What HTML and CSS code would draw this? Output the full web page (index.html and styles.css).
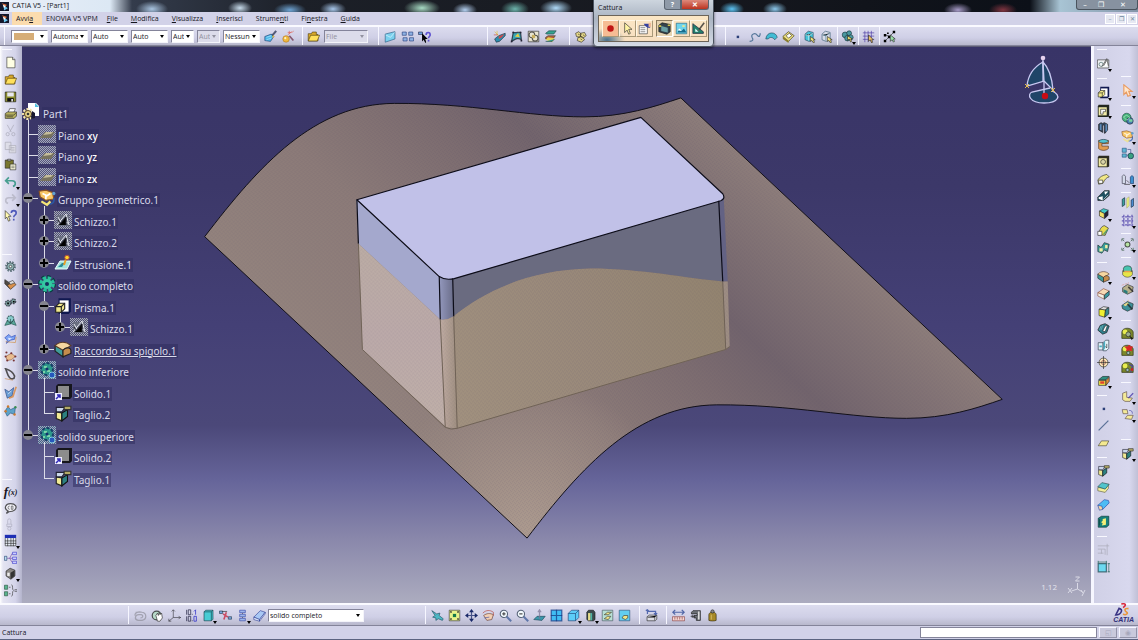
FILE: index.html
```html
<!DOCTYPE html>
<html lang="it">
<head>
  <meta charset="UTF-8">
  <meta name="viewport" content="width=device-width, initial-scale=1.0">
  <title>CATIA V5 - [Part1]</title>
  <link rel="stylesheet" href="styles.css">
</head>
<body>
  <!-- icon sprite -->
  <svg class="sprite" aria-hidden="true">
    <symbol id="app" viewBox="0 0 16 16"><path fill="#14182c" d="M0 0h16v16H0z"/><path fill="#e8743c" d="M3 2l9 3-2 4z"/><path fill="#6cc8f0" d="M7 6l7 5-7 4z"/><path fill="#fff" d="M5 5l5 2-3 4z"/></symbol>
    <symbol id="new" viewBox="0 0 16 16"><path fill="#ffffe4" stroke="#333" d="M3.500 1.500h7l3 3v10h-10z"/><path fill="#ccc" stroke="#333" d="M10.500 1.500v3h3"/></symbol>
    <symbol id="open" viewBox="0 0 16 16"><path fill="#d9a92c" stroke="#4d3c08" d="M1.500 13.500v-9h4l1-2h5v3h2v8z"/><path fill="#ffe05c" stroke="#4d3c08" d="M1.500 13.500l3-7h11l-3 7z"/></symbol>
    <symbol id="save" viewBox="0 0 16 16"><path fill="#8a8c2c" stroke="#111" d="M1.500 2.500h13v12h-13z"/><path fill="#e8e8f0" d="M4 3h8v5H4z"/><path fill="#111" d="M4 10h8v4H4z"/><path fill="#eee" d="M9 11h2v3H9z"/></symbol>
    <symbol id="print" viewBox="0 0 16 16"><path fill="#fff" stroke="#333" d="M5 7l2-5h7l-2 5z"/><path fill="#b7b15e" stroke="#222" d="M1.500 8l3-2h11v5l-3 3h-11z"/><path stroke="#222" fill="none" d="M2 10h10l3-3M3 12h8"/></symbol>
    <symbol id="cut" viewBox="0 0 16 16"><g fill="none" stroke="#a4a4b4"><path d="M4 1l5 9M12 1l-5 9"/><circle cx="4.500" cy="12.500" r="2"/><circle cx="11.500" cy="12.500" r="2"/></g></symbol>
    <symbol id="copy" viewBox="0 0 16 16"><g fill="#dedee8" stroke="#a8a8b4"><path d="M1.500 1.500h7v9h-7zM6.500 5.500h8v9h-8z"/><path d="M8 8h5M8 10h5M8 12h5"/></g></symbol>
    <symbol id="paste" viewBox="0 0 16 16"><path fill="#79772f" stroke="#222" d="M1.500 2.500h10v10h-10z"/><path fill="#ddd" stroke="#222" d="M4.500 1.500h4v2h-4z"/><path fill="#ffffe0" stroke="#222" d="M7.500 7.500h7v7h-7z"/><path stroke="#333" d="M9 10h4M9 12h4"/></symbol>
    <symbol id="undo" viewBox="0 0 16 16"><path fill="none" stroke="#168a70" stroke-width="2" d="M2 7h8c5 0 5 6 1 7M6 3L2 7l4 4"/></symbol>
    <symbol id="redo" viewBox="0 0 16 16"><path fill="none" stroke="#b2b2c0" stroke-width="2" d="M14 7H6c-5 0-5 6-1 7M10 3l4 4-4 4"/></symbol>
    <symbol id="help" viewBox="0 0 16 16"><path fill="#fff8b0" stroke="#222" d="M1.500 2v10l2-2 2 5 2-1-2-5h3z"/><path fill="none" stroke="#1f2eaa" stroke-width="2" d="M9 5c0-4 6-4 6 0 0 3-3 2-3 5M12 12v2"/></symbol>
    <symbol id="gear" viewBox="0 0 16 16"><circle cx="8" cy="8" r="5.500" fill="none" stroke="#3e5a60" stroke-width="2.500" stroke-dasharray="2 1.400"/><circle cx="8" cy="8" r="4.500" fill="#8fb3b4" stroke="#28353c"/><circle cx="8" cy="8" r="1.500" fill="#fff" stroke="#222"/></symbol>
    <symbol id="gear-green" viewBox="0 0 16 16"><circle cx="8" cy="8" r="6" fill="none" stroke="#083e40" stroke-width="4" stroke-dasharray="2.600 2.100"/><circle cx="8" cy="8" r="5.500" fill="none" stroke="#28c09a" stroke-width="3" stroke-dasharray="3 1.300"/><circle cx="8" cy="8" r="4.500" fill="#35c9a2"/><circle cx="8" cy="8" r="1.800" fill="#14305c"/></symbol>
    <symbol id="part-box" viewBox="0 0 16 16"><path fill="#504a44" stroke="#222" d="M1 2l6 4v7l-6-6z"/><path fill="#d88f4a" stroke="#333" d="M4 9l7-4 4 3-7 6z"/><path fill="#ddd" stroke="#333" d="M6 5l5-2 2 3-5 2z"/></symbol>
    <symbol id="gears" viewBox="0 0 16 16"><g fill="#799" stroke="#223" stroke-width="1.500"><circle cx="5" cy="9" r="3.500" stroke-dasharray="2 1"/><circle cx="11.500" cy="6.500" r="3" stroke-dasharray="2 1"/></g><path d="M4 8h2v2H4zM11 6h2v2h-2z"/></symbol>
    <symbol id="gear-net" viewBox="0 0 16 16"><path fill="#5aa79a" stroke="#1c5048" d="M1 14l3-6 8-1 3 7-6-2z"/><circle cx="8" cy="6" r="4" fill="#8cc" stroke="#244" stroke-width="1.500" stroke-dasharray="2 1"/><path stroke="#244" fill="none" d="M4 8l4 4 4-5M8 6v6"/></symbol>
    <symbol id="surf-blue" viewBox="0 0 16 16"><path fill="#7ea4f4" stroke="#2340b4" d="M1 7l5-4 3 3 5-2-1 5-5 1-5 4 1-4z"/><path fill="#dce6ff" d="M5 7l5 1-4 2z"/><path stroke="#d08a3c" fill="none" d="M2 12l12 1 1-7"/></symbol>
    <symbol id="net-orange" viewBox="0 0 16 16"><path fill="#e9bd90" stroke="#8c5c40" d="M2 8l7-4 5 4-5 4-5 1z"/><g fill="#733"><circle cx="2" cy="8" r="1.300"/><circle cx="9" cy="4" r="1.300"/><circle cx="14" cy="8" r="1.300"/><circle cx="4" cy="13" r="1.300"/><circle cx="12" cy="13" r="1.300"/><circle cx="3" cy="3" r="1.300"/></g></symbol>
    <symbol id="loop" viewBox="0 0 16 16"><path fill="none" stroke="#23211f" stroke-width="2" d="M2 1c6 2 10 6 11 9 0 4-4 4-6 2C4 9 4 5 2 1z"/><path stroke="#c8894a" fill="none" d="M1 13l10 2"/></symbol>
    <symbol id="sheet" viewBox="0 0 16 16"><path fill="#6b9fd6" stroke="#27427e" d="M1 4l5 3 6-5-2 10-6 3z"/><path stroke="#d98130" stroke-width="2" fill="none" d="M15 1l-4 12-5 2"/><path stroke="#fff" d="M5 10l4-4"/></symbol>
    <symbol id="poly-blue" viewBox="0 0 16 16"><path fill="#5da2c8" stroke="#27547c" d="M1 9l4-6 3 4 6-3-1 9-5-2-4 4z"/><g fill="#ce7a2d"><circle cx="2" cy="9" r="1.500"/><circle cx="5" cy="3" r="1.500"/><circle cx="13" cy="13" r="1.500"/></g><circle cx="14" cy="4" r="1.500" fill="#3a8c50"/></symbol>
    <symbol id="bubble" viewBox="0 0 16 16"><path fill="#f2f2f8" stroke="#222" stroke-width="1.500" d="M3 14l2-3C-1 8 2 2 8 2s9 4 5 8c-2 2-5 2-7 2z"/><path fill="none" stroke="#444" d="M7 5a2 2 0 100 4M9 5h2v4H9z"/></symbol>
    <symbol id="lock" viewBox="0 0 16 16"><g fill="none" stroke="#a9a9bb"><path d="M4.500 7V3a2 2 0 014 0v4"/><path d="M3.500 7.500h6v3h-6z"/><circle cx="6.500" cy="13" r="2"/></g></symbol>
    <symbol id="table" viewBox="0 0 16 16"><path fill="#e8eef8" d="M1 2h14v13H1z"/><path fill="#1d2fb4" d="M1 1h14v4H1z"/><path fill="none" stroke="#222" d="M1.500 5v9.500h13V5M1 8.500h14M1 11.500h14M4.500 5v10M8.500 5v10M11.500 5v10"/></symbol>
    <symbol id="relations" viewBox="0 0 16 16"><path fill="none" stroke="#7040a0" d="M4 9h3l3-6M7 9h3M7 9l3 5"/><path fill="#bde" stroke="#1f3f70" d="M.5 6.500h3v5h-3z"/><path fill="#ccf" stroke="#3a3ac8" d="M10.500 1.500h5v3h-5zM10.500 7.500h5v3h-5zM10.500 12.500h5v3h-5z"/></symbol>
    <symbol id="cube-dark" viewBox="0 0 16 16"><path fill="#8a8784" stroke="#1d1d1d" d="M2.500 5l5-3.500 6 2.500v7l-5 4-6-4z"/><path fill="#333" d="M8 7l5-3v7l-5 4z"/><path fill="#eee" d="M4 7h3v4H4z"/></symbol>
    <symbol id="formula" viewBox="0 0 16 16"><path fill="#58b48e" stroke="#28503c" d="M.5 1.500h4v5h-4zM.5 9.500h4v5h-4z"/><path stroke="#333" fill="none" d="M6 4h2M6 12h2M9 1c3 0 0 6 3 7-3 1 0 7-3 7M13 7h3M13 9h3"/></symbol>
    <symbol id="brush" viewBox="0 0 16 16"><path fill="#4db8e8" stroke="#1e3c70" d="M1 8l8-3 3 3-4 6-7-1z"/><path stroke="#263050" stroke-width="2.500" d="M15 1l-5 6"/><path stroke="#c9ecff" fill="none" d="M3 9l6-2M3 12l6-2"/><path fill="#e8b838" d="M11 6l2 2-3 2z"/></symbol>
    <symbol id="wand" viewBox="0 0 16 16"><circle cx="5" cy="11" r="4" fill="#f0b93e" stroke="#b07720"/><circle cx="4" cy="10" r="1.300" fill="#fff3c0"/><path stroke="#6c3048" stroke-width="2" d="M9 7l5 6"/><path stroke="#e06050" d="M9 1v4M7 3h5M13 3l1-2M7 6l5-4"/></symbol>
    <symbol id="envelope" viewBox="0 0 16 16"><path fill="#7bd0ee" stroke="#27587e" d="M1.500 5l12-3v9l-12 4z"/><path fill="none" stroke="#e8faff" d="M2 6l6 3 5-6"/></symbol>
    <symbol id="links" viewBox="0 0 16 16"><g fill="#8fb2e4" stroke="#243c78"><path d="M1.500 2.500h5v4h-5zM9.500 2.500h5v4h-5zM2.500 9.500h5v4h-5zM10.500 9.500h5v4h-5z"/></g></symbol>
    <symbol id="whats" viewBox="0 0 16 16"><path fill="#6da3de" stroke="#224" d="M.5 2.500h5v3h-5z"/><path fill="#000" d="M5 4v10l2-2 2 4 1-1-1-4h3z"/><path fill="none" stroke="#3a28c8" stroke-width="2" d="M10 6c0-4 5-4 5 0 0 2-2 2-2 4M13 12v2"/></symbol>
    <symbol id="paint-cube" viewBox="0 0 16 16"><path fill="#2b8cac" stroke="#1c2c3c" d="M2 11l5-4 8-3v3l-7 7-4 1z"/><path fill="#d04848" d="M7 8l7-3-3 4-4 2z"/><path stroke="#e0c030" d="M2 2l5 5M5 1v5"/><path stroke="#c43" d="M1 6h5"/></symbol>
    <symbol id="patch" viewBox="0 0 16 16"><path fill="#3aa6b4" stroke="#151c2a" stroke-width="1.500" d="M4 3c4 1 6-1 9 0l1 9c-4-3-7-1-12 2z"/><path fill="#e8cf44" d="M6 8l4-4 2 5z"/><path fill="#223" d="M3 2h2v2H3zM12 2h2v2h-2zM1 13h2v2H1zM13 12h2v2h-2z"/></symbol>
    <symbol id="target-box" viewBox="0 0 16 16"><path fill="#e8e4d0" stroke="#222" d="M1.500 1.500h13v13h-13z"/><g fill="none" stroke="#222" stroke-width="1.300"><circle cx="6" cy="6" r="3.500"/><circle cx="10" cy="10" r="3.500"/></g><path fill="#c8b060" d="M6 6h4v4H6z"/></symbol>
    <symbol id="layers" viewBox="0 0 16 16"><path fill="#b45b3a" stroke="#343" d="M2 9l3-2h9l-3 4H2z"/><path fill="#e5cf54" d="M2 12l3-3 8 1-3 5z"/><path fill="#34a390" stroke="#244" d="M2 4l4-3h9l-3 4H3zM2 14h8l3-3"/></symbol>
    <symbol id="nuts" viewBox="0 0 16 16"><g fill="#e6d98a" stroke="#2c2820"><path d="M2 4l4-2 3 3-2 4-4-1zM8 4l5-1 2 4-4 3-3-2zM5 9l5-1 3 4-4 3-5-2z"/><path d="M5 5l2 1M11 6l2 1M8 11l2 1"/></g></symbol>
    <symbol id="point" viewBox="0 0 16 16"><path fill="#2b3f78" d="M7 7h3v3H7z"/></symbol>
    <symbol id="curve" viewBox="0 0 16 16"><path fill="none" stroke="#2d5a82" stroke-width="1.500" d="M2 14c4 0 5-2 3-5-2-4 4-6 6-3 3 4 4 1 4-2"/></symbol>
    <symbol id="cap" viewBox="0 0 16 16"><path fill="#42bcd4" stroke="#1d4258" d="M1 11c1-10 13-9 14-2l-3 3c-2-3-6-4-8-1z"/></symbol>
    <symbol id="eraser-y" viewBox="0 0 16 16"><path fill="#ecdf7c" stroke="#333018" d="M1 8l7-6 7 5-7 7z"/><path fill="#fff" stroke="#333018" d="M5 7l4-3 3 3-4 3z"/><path fill="#8b7e2d" d="M1 8v3l7 5v-3z"/></symbol>
    <symbol id="sel-a" viewBox="0 0 16 16"><path fill="#48c4d8" stroke="#254258" d="M2.500 5l4-3.500 6 1.500v9l-5 2-5-2z"/><path stroke="#e8fcff" d="M7 5v8M3 6l4 1 5-3"/><path fill="#f0e07c" stroke="#222" d="M9 8v6l2-1 2 3 1-1-1-3h2z"/></symbol>
    <symbol id="sel-b" viewBox="0 0 16 16"><path fill="#d8dce8" stroke="#32556c" d="M2.500 5l4-3.500 6 1.500v9l-5 2-5-2z"/><path stroke="#5c8ca4" d="M7 5v8M3 6l4 1 5-3"/><path fill="#f0e07c" stroke="#222" d="M9 8v6l2-1 2 3 1-1-1-3h2z"/></symbol>
    <symbol id="sel-gear" viewBox="0 0 16 16"><g fill="#4a98a0" stroke="#1a3238"><circle cx="5" cy="6" r="3.500"/><circle cx="10" cy="4" r="3"/><circle cx="8" cy="10" r="3.500"/><circle cx="12" cy="9" r="3"/></g><path fill="#e9dc6c" stroke="#222" d="M8 7v6l2-2 2 4 1-1-1-3h2z"/></symbol>
    <symbol id="grid-cur" viewBox="0 0 16 16"><path stroke="#4430a0" fill="none" d="M1 3.500h14M1 7.500h14M1 11.500h14M3.500 1v14M7.500 1v14M11.500 1v14"/><path fill="#eec064" stroke="#222" d="M8 6v8l2-2 2 4 1-1-1-3h2z"/></symbol>
    <symbol id="net-black" viewBox="0 0 16 16"><path stroke="#222" fill="none" d="M2 14L14 2M2 6l8 2"/><path d="M1 5h3v3H1zM5 3h2v2H5zM12 1h3v3h-3zM6 7h3v3H6zM1 12h3v3H1z"/><path fill="#9be0a8" stroke="#222" d="M9 6v8l2-2 2 3 1-1-1-3h2z"/></symbol>
    <symbol id="rec" viewBox="0 0 16 16"><circle cx="8" cy="8" r="4" fill="#c01414"/></symbol>
    <symbol id="arrow" viewBox="0 0 16 16"><path fill="#fff4a4" stroke="#222" d="M4.500 1v12l3-3 2 5 2-1-2-5h4z"/></symbol>
    <symbol id="arrow-o" viewBox="0 0 16 16"><path fill="#ffe6cc" stroke="#e8853a" stroke-width="1.400" d="M3.500 1v12l3-3 2 5 3-1-2-5h4z"/></symbol>
    <symbol id="props" viewBox="0 0 16 16"><path fill="#fff" stroke="#333" d="M1.500 4.500h10v10h-10z"/><path stroke="#444" d="M3 7h6M3 9.500h6M3 12h6"/><path fill="#3440a0" d="M7 2h8v5h-3l-3-2z"/><path fill="#edb898" d="M13 1h3v5h-3z"/></symbol>
    <symbol id="camera" viewBox="0 0 16 16"><path fill="#33424c" stroke="#111" d="M1 4l4-3 10 2v9l-4 3-10-3z"/><path fill="#6aa0a4" d="M4 5l8 2v6l-8-2z"/><path fill="#cfc24a" d="M1 4h3v2H1zM12 3h3v2h-3z"/></symbol>
    <symbol id="pic" viewBox="0 0 16 16"><path fill="#6fd4ec" stroke="#20607c" d="M1.500 1.500h13v13h-13z"/><path fill="#f2e98c" d="M9 4h3v2H9z"/><path fill="#176b8c" d="M3 13l2-4 3 2 3-3 3 5z"/><path fill="#fff" d="M3 10l3-2 2 3z"/></symbol>
    <symbol id="square" viewBox="0 0 16 16"><path fill="#23806c" stroke="#113" d="M1 2v12h13v-2z"/><path fill="#dff" d="M4 8v4h4z"/><path stroke="#222" stroke-width="2" d="M15 1L9 9"/><path stroke="#b33" d="M9 9l-2 2"/></symbol>
    <symbol id="spiral" viewBox="0 0 16 16"><path fill="none" stroke="#93939f" stroke-width="1.500" d="M2 4h8c6 1 6 9 0 10H5c-5-1-4-7 1-7h3c3 1 2 4-1 4M1 8c0-4 4-5 9-4"/></symbol>
    <symbol id="hand-r" viewBox="0 0 16 16"><circle cx="7" cy="8" r="5.500" fill="#b7d8c8" stroke="#222" stroke-width="1.500"/><path fill="#fff" stroke="#222" d="M6 8l2-3 1 3 1-4 1 3 2-2 1 6-3 4H8z"/></symbol>
    <symbol id="axis" viewBox="0 0 16 16"><path fill="none" stroke="#34343c" d="M6.500 1v9.500H16M6.500 10.500L1 15M4.500 3l2-2 2 2M13 8.500l2 2-2 2M1 12v3h3"/></symbol>
    <symbol id="dims" viewBox="0 0 16 16"><g fill="none" stroke="#252545" stroke-width="1.200"><path d="M2 1v6M4 1h3v6H4zM9 6v1M2 9v6M4 9h3v6H4zM9 14v1"/><path stroke="#2a2ac8" d="M13 1v6M11 9h3v6h-3zM13 1l-2 2"/></g></symbol>
    <symbol id="cube-teal" viewBox="0 0 16 16"><path fill="#48ccd4" stroke="#113a44" d="M2.500 3.500l2-2h9v11l-2 2h-9z"/><path fill="none" stroke="#113a44" d="M2.500 3.500h9v11M11.500 3.500l2-2"/></symbol>
    <symbol id="pinch" viewBox="0 0 16 16"><path fill="#76a9e4" stroke="#234" d="M.5 2.500h4v3h-4zM11.500 9.500h4v3h-4z"/><path stroke="#c82038" stroke-width="2" fill="none" d="M5 6l6 4M9 4L6 13"/><path stroke="#222" d="M4 3h6"/></symbol>
    <symbol id="stack" viewBox="0 0 16 16"><path fill="#9db7ec" stroke="#3244a4" d="M4.500 1.500h7v3h-7zM4.500 6.500h7v3h-7zM4.500 11.500h7v3h-7z"/><path stroke="#222" d="M8 5v1M8 10v1"/></symbol>
    <symbol id="erase" viewBox="0 0 16 16"><path fill="#a9c8f4" stroke="#2a3c94" d="M1 10l8-8 6 2-7 9z"/><path fill="#e6effd" stroke="#2a3c94" d="M1 10l7 3v2l-7-2zM8 13l7-9v2l-7 9z"/></symbol>
    <symbol id="fly" viewBox="0 0 16 16"><path fill="#4cb8c4" stroke="#1d4c60" d="M1 2l6 4 4-1-1 3 5 4-1 2-5-2-3 2v-3l-4-1 3-2z"/></symbol>
    <symbol id="fit" viewBox="0 0 16 16"><path fill="#e8f48a" stroke="#333" d="M1.500 1.500h13v13h-13z"/><path fill="#147a4a" d="M6 6h4v4H6z"/><path stroke="#333" fill="none" d="M3 3l2 2M13 3l-2 2M3 13l2-2M13 13l-2-2M3 5V3h2M11 3h2v2M3 11v2h2M11 13h2v-2"/></symbol>
    <symbol id="pan" viewBox="0 0 16 16"><path fill="none" stroke="#182868" stroke-width="1.500" d="M8 2v12M2 8h12"/><path fill="#182868" d="M8 0l3 4H5zM8 16l3-4H5zM0 8l4-3v6zM16 8l-4-3v6z"/></symbol>
    <symbol id="rotate" viewBox="0 0 16 16"><path fill="#f2cfb4" stroke="#5c342c" d="M2 8c4-3 8-3 12-1l-2 6-6 1z"/><path fill="none" stroke="#b43c30" d="M1 5c4-4 9-4 13-1v4"/><path stroke="#3a46a0" d="M3 11l6-1"/></symbol>
    <symbol id="zoom-in" viewBox="0 0 16 16"><path stroke="#3c5c98" stroke-width="2.500" d="M9 9l6 6"/><circle cx="6" cy="6" r="4.500" fill="#f4fbff" stroke="#24344c" stroke-width="1.300"/><path stroke="#111" stroke-width="1.500" d="M4 6h4M6 4v4"/></symbol>
    <symbol id="zoom-out" viewBox="0 0 16 16"><path stroke="#3c5c98" stroke-width="2.500" d="M9 9l6 6"/><circle cx="6" cy="6" r="4.500" fill="#f4fbff" stroke="#24344c" stroke-width="1.300"/><path stroke="#111" stroke-width="1.500" d="M4 6h4"/></symbol>
    <symbol id="normal" viewBox="0 0 16 16"><path fill="#3b98ac" stroke="#1a4254" d="M1 13l4-4h10l-4 5z"/><path stroke="#7d7898" fill="none" stroke-width="1.500" d="M8 12V2M6 4l2-3 2 3"/></symbol>
    <symbol id="views" viewBox="0 0 16 16"><path fill="#40bdf4" stroke="#143b84" stroke-width="1.500" d="M1.500 1.500h13v13h-13z"/><path stroke="#143b84" stroke-width="1.500" d="M8 1v14M1 8h14"/></symbol>
    <symbol id="iso" viewBox="0 0 16 16"><path fill="#5ccdf8" stroke="#1c3a6c" d="M1.500 5.500l4-4h9v9l-4 4h-9z"/><path fill="none" stroke="#1c3a6c" d="M1.500 5.500h9v9M10.500 5.500l4-4"/></symbol>
    <symbol id="shade" viewBox="0 0 16 16"><path fill="#3c4a4c" stroke="#111" d="M3.500 4l2-2.500h6l2 2.500v9l-2 1.500h-6l-2-1.500z"/><path fill="#e6dc8a" d="M5 5h3v9H5z"/><path fill="#4cb2a4" d="M8 5h2v9H8z"/></symbol>
    <symbol id="hide" viewBox="0 0 16 16"><path fill="#b8e0d4" stroke="#44525c" d="M1.500 1.500h13v13h-13z"/><path fill="#f0e486" stroke="#333" d="M4 7l4-3h5l-4 3zM4 12l4-3h4l-3 4z"/></symbol>
    <symbol id="swap" viewBox="0 0 16 16"><path fill="#62cdf0" stroke="#2f4f74" d="M1.500 1.500h13v13h-13z"/><path fill="#f0e486" stroke="#333" d="M5 11l2-3h5v3l-3 2z"/></symbol>
    <symbol id="printer2" viewBox="0 0 16 16"><path fill="#dcdce4" stroke="#222" d="M2.500 9.500l3-2h9v5l-2 2h-10z"/><path stroke="#222" d="M3 10h9l2-2M12 10v4"/><path fill="none" stroke="#28449c" stroke-width="1.500" d="M3 6V3h10v3M1 2l2-1 2 2M11 5l2 2 2-2"/></symbol>
    <symbol id="ruler" viewBox="0 0 16 16"><path stroke="#234090" stroke-width="1.500" fill="none" d="M1 4h14M4 1L1 4l3 3M12 1l3 3-3 3"/><path fill="#f6d8d4" stroke="#823434" d="M.5 9.500h15v5H.5z"/><path stroke="#823434" d="M3.500 10v3M6.500 10v3M9.500 10v3M12.500 10v3"/></symbol>
    <symbol id="clamp" viewBox="0 0 16 16"><path fill="#6c7076" stroke="#111" d="M5 2h9v12H9v-3H6V8h4V6H3V4z"/><path fill="#ddd" d="M11 3h2v10h-2z"/><path stroke="#111" d="M2 9h5M4 7v4"/></symbol>
    <symbol id="weight" viewBox="0 0 16 16"><path fill="#a88a28" stroke="#2c2408" d="M3.500 7c0-2 2-2 2-3h5c0 1 2 1 2 3v7c-2 1-7 1-9 0z"/><circle cx="8" cy="3" r="2" fill="#888" stroke="#222"/><path stroke="#f0d888" d="M6.500 7v6"/></symbol>
    <symbol id="sketch" viewBox="0 0 16 16"><path fill="#f0f2f4" stroke="#333" d="M.5 3.500h14v10H.5z"/><circle cx="5" cy="9" r="2.500" fill="none" stroke="#39605c"/><path fill="#fff" stroke="#222" d="M6 12l6-10 2 9M8 11l4-7"/></symbol>
    <symbol id="pad" viewBox="0 0 16 16"><path fill="#101850" d="M4 1h11v12l-2 2H4z"/><path fill="#fff" d="M5 3h8v10H5z"/><path fill="#f0e88c" stroke="#222" d="M1.500 8.500l3-3h5v5l-3 3h-5z"/><path fill="none" stroke="#222" d="M1.500 8.500h5v5M6.500 8.500l3-3"/></symbol>
    <symbol id="pocket" viewBox="0 0 16 16"><path fill="#222720" d="M2 1h13v13l-2 2H1V3z"/><path fill="#f2eca8" d="M2 4h10v10H2z"/><path fill="#fff" stroke="#222" d="M4.500 6.500h6v3h-3v3h-3z"/></symbol>
    <symbol id="shaft" viewBox="0 0 16 16"><path fill="#344860" stroke="#111" d="M2 4l3-2 2 1 2-1 4 2v7l-3 4H9V5H7v9l-5-3z"/><path stroke="#6b9fd4" stroke-width="2" d="M4.500 4v7M11.500 4v9"/></symbol>
    <symbol id="groove" viewBox="0 0 16 16"><path fill="#e39c50" stroke="#4c2c10" d="M2 3v10c3 3 9 3 12 0v-3H6V7h8V3z"/><path fill="#54c3cf" stroke="#234" d="M2 4c2-3 10-3 12 0-2 3-10 3-12 0z"/></symbol>
    <symbol id="hole" viewBox="0 0 16 16"><path fill="#2c2c20" d="M2 1h13v13l-2 1H1V3z"/><path fill="#f0eaa4" d="M2 4h10v10H2z"/><circle cx="7.500" cy="8.500" r="3" fill="#d8d4a8" stroke="#222"/></symbol>
    <symbol id="rib" viewBox="0 0 16 16"><path fill="#f2e888" stroke="#2c2c18" d="M1 10c2-4 6-6 11-7l3 3c-4 1-5 3-8 8l-5 1z"/><path fill="#fff" stroke="#222" d="M2 10h5v4H2z"/></symbol>
    <symbol id="slot" viewBox="0 0 16 16"><path fill="#1f5060" stroke="#111" d="M1 10l8-8h6v6l-7 6H1z"/><path fill="#fff" d="M2 12v-2l5-1v5zM9 3h5l-4 4z"/><path stroke="#fff" d="M8 13l6-6"/></symbol>
    <symbol id="stiff" viewBox="0 0 16 16"><path fill="#40c8c8" stroke="#133" d="M3 5l5-3 6 2-5 4z"/><path fill="#f0e068" stroke="#222" d="M3 5l6 3v6l-6-3z"/><path fill="#223" d="M9 8l5-4v6l-5 5z"/></symbol>
    <symbol id="loft" viewBox="0 0 16 16"><path fill="#e8dc50" stroke="#222" d="M2 13c1-6 3-10 7-11l5 3-4 9z"/><path fill="#fff" stroke="#222" d="M1 9h5v5H1z"/><path stroke="#348c70" stroke-width="2" fill="none" d="M8 13l5-6"/></symbol>
    <symbol id="loft2" viewBox="0 0 16 16"><path fill="#3b9c98" stroke="#122" d="M1 5l4 3 4-6 6 2-2 9-4-2-3 4-5-2z"/><path fill="#f3eda4" d="M3 9h4v4H3zM10 5h3v4h-3z"/></symbol>
    <symbol id="fillet" viewBox="0 0 16 16"><path fill="#3f9c9a" stroke="#222" d="M1 5l7 4v6l-7-5z"/><path fill="#f6d6a0" stroke="#5c3c28" d="M1 5c4-4 10-4 14 0l-7 4z"/><path fill="#c48c4c" stroke="#222" d="M8 9c4-4 7-1 7 0v3l-7 3z"/></symbol>
    <symbol id="chamfer" viewBox="0 0 16 16"><path fill="#f6d9b4" stroke="#8c4c38" d="M1 7l7-5 7 3-6 5z"/><path fill="#f3efe4" stroke="#8c4c38" d="M1 7l8 3v5l-8-4z"/><path fill="#3b98a0" stroke="#222" d="M9 10l6-5v5l-6 5z"/></symbol>
    <symbol id="draft" viewBox="0 0 16 16"><path fill="#f0f030" stroke="#222" d="M2.500 5l8 1-1 9-7-2z"/><path fill="#ddd" stroke="#222" d="M3 5l5-3 6 1-4 3z"/><path fill="#36888c" stroke="#222" d="M10.500 6l4-3v8l-5 4z"/></symbol>
    <symbol id="shell" viewBox="0 0 16 16"><path fill="#2f7f8c" stroke="#111" d="M1 10l3-6 6-2 5 3-3 8-5 2z"/><path fill="#fff" stroke="#222" d="M7 11l3-6 3-1-3 8z"/><path stroke="#7fc0c4" d="M5 5l-2 5M7 4l-2 6"/></symbol>
    <symbol id="thick" viewBox="0 0 16 16"><path fill="#e4f2f8" stroke="#234" d="M1.500 4.500h6v9h-6zM7.500 4.500l3-3h4v10l-3 3h-4z"/><path fill="#4ab0c4" d="M8 5l2-3v9l-2 3zM3 8h3v2H3z"/><path stroke="#222" d="M12 6v5M10 9l2 2"/></symbol>
    <symbol id="target" viewBox="0 0 16 16"><circle cx="8" cy="8" r="5.500" fill="#f8e4b4" stroke="#222"/><circle cx="8" cy="8" r="2.500" fill="none" stroke="#833"/><path stroke="#222" d="M8 0v16M0 8h16"/></symbol>
    <symbol id="replace" viewBox="0 0 16 16"><path fill="#2f9080" stroke="#122" d="M2 7l5-4h8l-4 4z"/><path fill="#f0e448" stroke="#222" d="M2 8h9v6H2z"/><path fill="#e04030" d="M4 9h5v3H4z"/><path fill="#e0903c" stroke="#222" d="M11 8l4-4v5l-4 5z"/></symbol>
    <symbol id="line" viewBox="0 0 16 16"><path stroke="#33507c" stroke-width="1.500" d="M2 14L14 2"/></symbol>
    <symbol id="plane" viewBox="0 0 16 16"><path fill="#f4e990" stroke="#444028" d="M1.500 12l4-6h9l-3 6z"/></symbol>
    <symbol id="split" viewBox="0 0 16 16"><path fill="#f1ea94" stroke="#222" d="M2 7l5 1v7l-5-2z"/><path fill="#2c8080" stroke="#111" d="M7 8l5-3v6l-5 4z"/><path fill="#ccd8ec" stroke="#223" d="M2 3h8l-3 4H2z"/><path fill="#b3aa66" stroke="#333" d="M9 2h6v3h-6z"/></symbol>
    <symbol id="thicksurf" viewBox="0 0 16 16"><path fill="#f4f09c" stroke="#554" d="M1 8l9 1 4-5v5l-4 5-9-2z"/><path fill="#52c4cc" stroke="#244" d="M1 7l5-5 9 2-5 6z"/></symbol>
    <symbol id="close" viewBox="0 0 16 16"><path fill="#4cbcf4" stroke="#2444a8" d="M1 9l8-7 5 1 1 3-8 8z"/><path fill="#f8d8a4" stroke="#2444a8" d="M1 9l5 1 1 4-4 1z"/></symbol>
    <symbol id="sew" viewBox="0 0 16 16"><path fill="#16807c" stroke="#053030" d="M1.500 4l4-2.500h9v11l-3 2.500h-10z"/><path fill="#f4ee78" d="M7 5l4-1v8l-5 1 1-3-2-1 2-2z"/><path stroke="#053030" d="M3 5v8"/></symbol>
    <symbol id="gray-corner" viewBox="0 0 16 16"><path fill="none" stroke="#a5a5b1" d="M1 3.500h14M1 7.500h9v7M12.500 1v14M1 12.500h7M5.500 8v5"/></symbol>
    <symbol id="frame" viewBox="0 0 16 16"><path fill="#6cd8f0" stroke="#1f4c54" stroke-width="1.500" d="M1.500 4.500h10v10h-10z"/><path stroke="#1c5c50" fill="none" d="M1 2.500h11M14.500 4v11M1.500 1v3M11.500 1v3M13 4.500h3M13 14.500h3"/></symbol>
    <symbol id="catalog" viewBox="0 0 16 16"><circle cx="7" cy="7" r="5.500" fill="#42b078" stroke="#234c48"/><circle cx="11" cy="11" r="4" fill="#4880b0" stroke="#223"/><path stroke="#c3f0d0" fill="none" d="M3 6l4-2 4 3-4 3z"/><path fill="#7cd4a0" d="M10 9h4v3h-4z"/></symbol>
    <symbol id="geoset" viewBox="0 0 16 16"><path fill="#f8c868" stroke="#8c5424" d="M1 2l6-1 6 2 1 6-7 1-5-3z"/><path stroke="#fff" fill="none" stroke-width="1.500" d="M4 4l4 2 3-2M7 6v3"/><path fill="none" stroke="#2b57a4" stroke-width="1.500" d="M9 13c3 1 6-1 5-5"/><path fill="none" stroke="#f4e478" stroke-width="2" d="M3 11l5 3 3-3"/><circle cx="14" cy="4" r="1.500" fill="#60a0d0"/></symbol>
    <symbol id="body-tree" viewBox="0 0 16 16"><path fill="#5fb6d4" stroke="#25507c" d="M1.500 1.500h5v5h-5zM1.500 8.500h5v4h-5z"/><path stroke="#28407c" fill="none" d="M8 3h4v5M7 10h3"/><circle cx="12" cy="11" r="3.500" fill="#39a080" stroke="#124"/></symbol>
    <symbol id="trans" viewBox="0 0 16 16"><path fill="#d6dceb" stroke="#334" d="M1.500 4l2-2 2 2v9h-4z"/><path fill="#3b8fd0" stroke="#12305c" d="M11.500 5l2-2 2 2v8h-4z"/><path stroke="#222" fill="none" d="M4 14h7M7 9l3 3"/></symbol>
    <symbol id="mirror" viewBox="0 0 16 16"><path fill="#3aa09c" stroke="#123" d="M1.500 4l3-2v9l-3 2z"/><path fill="#ecf07a" stroke="#aa8" d="M7 3l3-2v11l-3 3z"/><path fill="#4a8cd4" stroke="#123" d="M12.500 5l3-2v9l-3 2z"/></symbol>
    <symbol id="pattern" viewBox="0 0 16 16"><path stroke="#4334a4" fill="none" stroke-dasharray="3 1" stroke-width="1.500" d="M1 3.500h14M1 8.500h14M1 13.500h14M3.500 1v14M8.500 1v14M13.500 1v14"/></symbol>
    <symbol id="scale" viewBox="0 0 16 16"><circle cx="8" cy="8" r="3" fill="#b8e4a4" stroke="#222" stroke-width="1.300"/><path fill="none" stroke="#23482c" d="M4 4L2 2M12 4l2-2M4 12l-2 2M12 12l2 2M1 4V1h3M12 1h3v3M1 12v3h3M12 15h3v-3"/></symbol>
    <symbol id="material" viewBox="0 0 16 16"><path fill="#e6e648" stroke="#444" d="M2 7h12v5c-3 4-9 4-12 0z"/><path fill="#48c4b0" stroke="#333" d="M3 4c1-4 9-4 10 0v4H3z"/><path fill="#e8a050" d="M4 7h8v2H4z"/></symbol>
    <symbol id="fillet-x" viewBox="0 0 16 16"><path fill="#b8b08c" stroke="#222" d="M2 7l6-4 7 3-1 6-6 3-6-3z"/><path fill="#287c7c" d="M3 9l5 2v4l-5-3z"/><path stroke="#222" stroke-width="2" d="M9 6l6 6"/><path stroke="#e07050" stroke-dasharray="1 1" d="M1 4l9-3"/></symbol>
    <symbol id="analysis" viewBox="0 0 16 16"><path fill="#3c9098" stroke="#222" d="M1 8l7-5 7 3-1 6-6 3-6-3z"/><path fill="#e8d888" d="M3 7l5-3 2 2-5 3z"/><path stroke="#222" stroke-width="2" d="M8 6l6 7"/><path stroke="#e8c070" d="M3 2l2 2M9 1v2"/></symbol>
    <symbol id="tap" viewBox="0 0 16 16"><path fill="#7c882c" stroke="#20240c" d="M1 14V6c1-6 12-6 14 0v8z"/><circle cx="5" cy="6" r="3" fill="#e8ec50"/><circle cx="9" cy="9" r="3" fill="#9fb08c" stroke="#222"/><path fill="#1c1c18" d="M10 10l5 4-2 2z"/></symbol>
    <symbol id="tap-r" viewBox="0 0 16 16"><path fill="#7c882c" stroke="#20240c" d="M1 14V6c1-6 12-6 14 0v8z"/><circle cx="5" cy="6" r="3" fill="#e8ec50"/><path fill="#dc2828" d="M10 1l2 2h3l-2 3 1 3-4-1-4 1 1-3-3-3h4z"/><circle cx="9" cy="11" r="2" fill="#9fc0bc" stroke="#222"/></symbol>
    <symbol id="tap-b" viewBox="0 0 16 16"><path fill="#7c882c" stroke="#20240c" d="M1 14V6c1-6 12-6 14 0v8z"/><circle cx="5" cy="6" r="3" fill="#e8ec50"/><path stroke="#3c34c4" stroke-width="1.500" fill="none" d="M10 4l4 2-2 8"/><path fill="#c22" d="M12 9h3v3h-3z"/><circle cx="8" cy="11" r="2" fill="#9fc0bc" stroke="#222"/></symbol>
    <symbol id="note" viewBox="0 0 16 16"><path fill="#f3e998" stroke="#544" d="M2 12V4l5-2v7l7 1-3 4H5z"/><path stroke="#3b2ca4" stroke-width="1.500" d="M15 4l-6 6"/></symbol>
    <symbol id="note2" viewBox="0 0 16 16"><path fill="#f3e998" stroke="#544" d="M1.500 2h6l1 5h-6zM5 13l3-4h7l-2 5z"/><path stroke="#3b3ca4" fill="none" d="M10 3c3 0 4 1 4 4"/></symbol>
    <!-- tree only -->
    <symbol id="t-part" viewBox="0 0 18 18"><path fill="#fff" d="M6 0h8l3 3v10H6z"/><path fill="#50c0e0" d="M13 0l4 4h-4z"/><circle cx="6" cy="11" r="4.500" fill="none" stroke="#f4e6b0" stroke-width="3" stroke-dasharray="2 1.200"/><circle cx="6" cy="11" r="3.500" fill="#e8d68c" stroke="#5c4820"/><circle cx="6" cy="11" r="1.300" fill="#333"/><path fill="#191830" d="M10 8l3 2v5l-4 1z"/></symbol>
    <pattern id="dots" width="2" height="2" patternUnits="userSpaceOnUse"><path fill="#a3a7bc" d="M0 0h1v1H0zM1 1h1v1H1z"/></pattern>
    <symbol id="t-plane" viewBox="0 0 18 18"><path fill="#56567c" d="M0 0h18v18H0z"/><path fill="url(#dots)" d="M0 0h18v18H0z"/><path fill="#77725e" d="M2 13l5-6h10l-4 6z"/><path fill="#c5bd9c" d="M5 10l3-3h7l-2 2z"/></symbol>
    <symbol id="t-sketch" viewBox="0 0 18 18"><path fill="#50506c" d="M0 0h18v18H0z"/><path fill="url(#dots)" d="M0 0h18v18H0z"/><path fill="#6a6f80" d="M3 4h12v11H3z"/><path fill="none" stroke="#e4e6ee" d="M3 14l9-11 3 11M4 6l4 7M9 11l5 1"/><path stroke="#1c1c28" d="M5 14l7-8v8M4 9l3 4"/></symbol>
    <symbol id="t-ext" viewBox="0 0 18 18"><path fill="#a4e4dc" stroke="#eff" d="M1 15l5-8h11l-4 8z"/><path fill="#2c8c98" d="M4 13l4-4h3l-3 4z"/><path stroke="#e8a028" stroke-width="2" d="M10 11l2-6"/><circle cx="13" cy="3.500" r="2.300" fill="#ffd428" stroke="#a44"/></symbol>
    <symbol id="t-body" viewBox="0 0 18 18"><path fill="#46668c" d="M0 0h18v18H0z"/><path fill="url(#dots)" d="M0 0h18v18H0z"/><circle cx="9" cy="8" r="6" fill="#2d998c" stroke="#183e68" stroke-width="2" stroke-dasharray="3 1.500"/><path fill="#7ad4a8" d="M6 5h3v2H6zM9 9h3v2H9zM5 10h2v2H5z"/><circle cx="9" cy="8" r="1.500" fill="#14306c"/><circle cx="14" cy="14" r="3" fill="#2658bc" stroke="#8cd"/></symbol>
    <symbol id="t-solid" viewBox="0 0 18 18"><path fill="#16161c" d="M4 1h14v13l-2 2H2V3z"/><path fill="#8c8c8c" d="M4 3h11v11H4z"/><path fill="#eef" d="M1 10h7v7H1z"/><path fill="none" stroke="#3028b8" stroke-width="1.500" d="M2 16l4-4M3 12h3v3"/></symbol>
  </svg>

  <div class="app">
    <header class="titlebar">
      <svg class="app-icon"><use href="#app"/></svg>
      <h1>CATIA V5 - [Part1]</h1>
      <div class="win-buttons">
        <button aria-label="Riduci a icona">–</button><button aria-label="Ripristina">❐</button><button class="win-close" aria-label="Chiudi">✕</button>
      </div>
    </header>

    <nav class="menubar">
      <svg class="app-icon"><use href="#app"/></svg>
      <button class="active">Avvi<u>a</u></button>
      <button class="snug">ENOVIA V5 VPM</button>
      <button><u>F</u>ile</button>
      <button><u>M</u>odifica</button>
      <button><u>V</u>isualizza</button>
      <button><u>I</u>nserisci</button>
      <button>Strume<u>n</u>ti</button>
      <button>Fi<u>n</u>estra</button>
      <button><u>G</u>uida</button>
      <div class="mdi-buttons">
        <button aria-label="Riduci documento">–</button><button aria-label="Ripristina documento">❐</button><button aria-label="Chiudi documento">✕</button>
      </div>
    </nav>

    <div class="bar bar-top">
      <div class="group fields">
        <span class="combo w-md swatch"><select aria-label="Colore"><option></option></select></span>
        <span class="combo w-md"><select aria-label="Trasparenza"><option>Automatico</option></select></span>
        <span class="combo w-md"><select aria-label="Spessore linea"><option>Auto</option></select></span>
        <span class="combo w-md"><select aria-label="Tipo linea"><option>Auto</option></select></span>
        <span class="combo w-sm"><select aria-label="Simbolo punto"><option>Auto</option></select></span>
        <span class="combo w-sm"><select aria-label="Rendering" disabled><option>Auto</option></select></span>
        <span class="combo w-md"><select aria-label="Layer"><option>Nessuno</option></select></span>
        <button class="tool" aria-label="Copia formato"><svg><use href="#brush"/></svg></button>
        <button class="tool" aria-label="Procedura guidata"><svg><use href="#wand"/></svg></button>
      </div>
      <div class="group fields">
        <button class="tool" aria-label="Apri"><svg><use href="#open"/></svg></button>
        <span class="combo w-lg"><select aria-label="File" disabled><option>File</option></select></span>
      </div>
      <div class="group g-links">
        <button class="tool" aria-label="Invia"><svg><use href="#envelope"/></svg></button>
        <button class="tool" aria-label="Collegamenti"><svg><use href="#links"/></svg></button>
        <button class="tool" aria-label="Informazioni"><svg><use href="#whats"/></svg></button>
      </div>
      <div class="group g-surf">
        <button class="tool" aria-label="Applica materiale"><svg><use href="#paint-cube"/></svg></button>
        <button class="tool" aria-label="Superficie"><svg><use href="#patch"/></svg></button>
        <button class="tool" aria-label="Analisi"><svg><use href="#target-box"/></svg></button>
        <button class="tool" aria-label="Livelli"><svg><use href="#layers"/></svg></button>
      </div>
      <div class="group g-nuts">
        <button class="tool" aria-label="Catalogo"><svg><use href="#nuts"/></svg></button>
      </div>
      <div class="group g-filter">
        <button class="tool" aria-label="Punti"><svg><use href="#point"/></svg></button>
        <button class="tool" aria-label="Curve"><svg><use href="#curve"/></svg></button>
        <button class="tool" aria-label="Superfici"><svg><use href="#cap"/></svg></button>
        <button class="tool" aria-label="Volumi"><svg><use href="#eraser-y"/></svg></button>
      </div>
      <div class="group close-by">
        <button class="tool" aria-label="Seleziona feature"><svg><use href="#sel-a"/></svg></button>
        <button class="tool" aria-label="Seleziona geometria"><svg><use href="#sel-b"/></svg></button>
      </div>
      <div class="group close-by">
        <button class="tool drop" aria-label="Seleziona corpo"><svg><use href="#sel-gear"/></svg></button>
      </div>
      <div class="group close-by">
        <button class="tool" aria-label="Griglia"><svg><use href="#grid-cur"/></svg></button>
      </div>
      <div class="group close-by">
        <button class="tool" aria-label="Rete"><svg><use href="#net-black"/></svg></button>
      </div>
    </div>

    <main class="work">
      <aside class="side side-left">
        <div class="stack">
          <button class="tool" aria-label="Nuovo"><svg><use href="#new"/></svg></button>
          <button class="tool" aria-label="Apri"><svg><use href="#open"/></svg></button>
          <button class="tool" aria-label="Salva"><svg><use href="#save"/></svg></button>
          <button class="tool" aria-label="Stampa"><svg><use href="#print"/></svg></button>
          <button class="tool" aria-label="Taglia"><svg><use href="#cut"/></svg></button>
          <button class="tool" aria-label="Copia"><svg><use href="#copy"/></svg></button>
          <button class="tool" aria-label="Incolla"><svg><use href="#paste"/></svg></button>
          <button class="tool drop" aria-label="Annulla"><svg><use href="#undo"/></svg></button>
          <button class="tool drop" aria-label="Ripeti"><svg><use href="#redo"/></svg></button>
          <button class="tool" aria-label="Guida"><svg><use href="#help"/></svg></button>
        </div>
        <div class="stack stack-modules">
          <button class="tool" aria-label="Part Design"><svg><use href="#gear"/></svg></button>
          <button class="tool" aria-label="Sheet Metal"><svg><use href="#part-box"/></svg></button>
          <button class="tool" aria-label="Assembly"><svg><use href="#gears"/></svg></button>
          <button class="tool" aria-label="Analisi strutturale"><svg><use href="#gear-net"/></svg></button>
          <button class="tool" aria-label="Shape Design"><svg><use href="#surf-blue"/></svg></button>
          <button class="tool" aria-label="Digitized Shape"><svg><use href="#net-orange"/></svg></button>
          <button class="tool" aria-label="FreeStyle"><svg><use href="#loop"/></svg></button>
          <button class="tool" aria-label="Drafting"><svg><use href="#sheet"/></svg></button>
          <button class="tool" aria-label="Shape Sculptor"><svg><use href="#poly-blue"/></svg></button>
        </div>
        <div class="stack stack-know">
          <button class="tool fx" aria-label="Formula">f<small>(x)</small></button>
          <button class="tool" aria-label="Commento"><svg><use href="#bubble"/></svg></button>
          <button class="tool" aria-label="Blocca"><svg><use href="#lock"/></svg></button>
          <button class="tool drop" aria-label="Tabella"><svg><use href="#table"/></svg></button>
          <button class="tool" aria-label="Relazioni"><svg><use href="#relations"/></svg></button>
          <button class="tool drop" aria-label="Configurazioni"><svg><use href="#cube-dark"/></svg></button>
          <button class="tool" aria-label="Equazioni"><svg><use href="#formula"/></svg></button>
        </div>
      </aside>

      <section class="viewport">
        <svg class="scene" viewBox="22 47 1070 557" preserveAspectRatio="xMinYMin meet">
          <defs>
            <!-- shading runs across the extrusion direction -->
            <linearGradient id="sheet-fill" gradientUnits="userSpaceOnUse" x1="366" y1="388" x2="658" y2="76">
              <stop offset="0" stop-color="#93837d"/><stop offset=".3" stop-color="#8c7b78"/><stop offset=".55" stop-color="#7d6d70"/><stop offset=".7" stop-color="#72646c"/><stop offset="1" stop-color="#8d7d7a"/>
            </linearGradient>
            <radialGradient id="tip" gradientUnits="userSpaceOnUse" cx="528" cy="530" r="150"><stop offset="0" stop-color="#ae9c90" stop-opacity=".9"/><stop offset="1" stop-color="#ae9c90" stop-opacity="0"/></radialGradient>
            <pattern id="grain" width="4" height="4" patternUnits="userSpaceOnUse"><path fill="#3c3566" fill-opacity=".1" d="M0 0h1v1H0zM2 1h1v1H2zM1 2h1v1H1zM3 3h1v1H3z"/></pattern>
            <linearGradient id="round-top"><stop offset="0" stop-color="#9398bd"/><stop offset="1" stop-color="#6b6e8a"/></linearGradient>
            <linearGradient id="round-low"><stop offset="0" stop-color="#c0aca2"/><stop offset="1" stop-color="#9f8f80"/></linearGradient>
            <linearGradient id="left-low" x1="0" y1="0" x2="0" y2="1"><stop offset="0" stop-color="#bcada4"/><stop offset=".5" stop-color="#bcaaa9"/><stop offset="1" stop-color="#c0b0a8"/></linearGradient>
            <linearGradient id="right-low" gradientUnits="userSpaceOnUse" x1="454" y1="400" x2="727" y2="300"><stop offset="0" stop-color="#a1917e"/><stop offset=".5" stop-color="#99897a"/><stop offset="1" stop-color="#93846f"/></linearGradient>
            <path id="sheet-shape" d="M205 237C260 165 315 104 395 103.500C470 103 530 117 585 117C625 117 655 107 682 98L1004 400C978 409 948 419 908 419C853 419 793 405 718 405.500C638 406 583 467 528 539z"/>
          </defs>
          <use href="#sheet-shape" fill="url(#sheet-fill)"/>
          <use href="#sheet-shape" fill="url(#tip)"/>
          <use href="#sheet-shape" fill="url(#grain)" stroke="#121018"/>
          <!-- side faces: cool above the cut, warm below -->
          <path fill="#a4a8cd" d="M357 200L440 277L441 320L359 244z"/>
          <path fill="url(#left-low)" d="M359 244L441 320L446 427L363 350z"/>
          <path fill="url(#round-top)" d="M440 277L454 279L454 317Q448 321 441 320z"/>
          <path fill="url(#round-low)" d="M441 320Q448 321 454 317L458 429L446 428z"/>
          <path fill="#6a6b80" d="M454 279L720 201L724 282C690 279 640 269 592 269C530 270 485 292 454 317z"/>
          <path fill="url(#right-low)" d="M454 317C485 292 530 270 592 269C640 269 690 279 724 282L727 350L458 429z"/>
          <path fill="#636284" d="M720 201L725 198L729 282H724z"/>
          <path fill="#9d8d82" d="M724 282H729L731 347L727 350z"/>
          <path fill="url(#grain)" d="M359 244L441 320Q448 321 454 317C485 292 530 270 592 269C640 269 690 279 729 282L731 347L458 429L446 428L363 350z"/>
          <path fill="#c1c1e8" stroke="#0c0c18" stroke-width="1.200" stroke-linejoin="round" d="M357.500 200L642 117.500L724 194Q727 199 722 201L455 279Q446 281 440 277z"/>
          <path fill="none" stroke="#0c0c18" stroke-width="1.200" d="M357.500 200L359 244M440 277L441 320M453.500 279L454.500 317M720 201L724 282"/>
          <path fill="none" stroke="#6f6256" d="M359 244L363 350L446 428Q452 431 458 429L727 350L731 347M441 320L446 428M454.500 317L458 429M724 282L727 350"/>
        </svg>

        <ul class="tree">
          <li><svg class="root-icon"><use href="#t-part"/></svg><span>Part1</span></li>
          <li><i class="branch"></i><svg><use href="#t-plane"/></svg><span>Piano <b>xy</b></span></li>
          <li><i class="branch"></i><svg><use href="#t-plane"/></svg><span>Piano <b>yz</b></span></li>
          <li><i class="branch"></i><svg><use href="#t-plane"/></svg><span>Piano <b>zx</b></span></li>
          <li><i class="branch"><button class="knob minus" aria-label="Comprimi"></button></i><svg><use href="#geoset"/></svg><span>Gruppo geometrico.1</span></li>
          <li><i class="trunk"></i><i class="branch"><button class="knob" aria-label="Espandi"></button></i><svg><use href="#t-sketch"/></svg><span>Schizzo.1</span></li>
          <li><i class="trunk"></i><i class="branch"><button class="knob" aria-label="Espandi"></button></i><svg><use href="#t-sketch"/></svg><span>Schizzo.2</span></li>
          <li><i class="trunk"></i><i class="branch last"><button class="knob" aria-label="Espandi"></button></i><svg><use href="#t-ext"/></svg><span>Estrusione.1</span></li>
          <li><i class="branch"><button class="knob minus" aria-label="Comprimi"></button></i><svg><use href="#gear-green"/></svg><span>solido completo</span></li>
          <li><i class="trunk"></i><i class="branch"><button class="knob minus" aria-label="Comprimi"></button></i><svg><use href="#pad"/></svg><span>Prisma.1</span></li>
          <li><i class="trunk"></i><i class="trunk"></i><i class="branch last"><button class="knob" aria-label="Espandi"></button></i><svg><use href="#t-sketch"/></svg><span>Schizzo.1</span></li>
          <li><i class="trunk"></i><i class="branch last"><button class="knob" aria-label="Espandi"></button></i><svg><use href="#fillet"/></svg><span class="current">Raccordo su spigolo.1</span></li>
          <li><i class="branch"><button class="knob minus" aria-label="Comprimi"></button></i><svg><use href="#t-body"/></svg><span>solido inferiore</span></li>
          <li><i class="trunk"></i><i class="branch"></i><svg><use href="#t-solid"/></svg><span>Solido.1</span></li>
          <li><i class="trunk"></i><i class="branch last"></i><svg><use href="#split"/></svg><span>Taglio.2</span></li>
          <li><i class="branch last"><button class="knob minus" aria-label="Comprimi"></button></i><svg><use href="#t-body"/></svg><span>solido superiore</span></li>
          <li><i class="trunk blank"></i><i class="branch"></i><svg><use href="#t-solid"/></svg><span>Solido.2</span></li>
          <li><i class="trunk blank"></i><i class="branch last"></i><svg><use href="#split"/></svg><span>Taglio.1</span></li>
        </ul>

        <svg class="compass" viewBox="0 0 40 52">
          <g stroke="#c9c9f2" stroke-width="1.300" fill="#1f4568">
            <path d="M19 7C10 12 4 20 3 31L20 26z"/><path d="M19 7c6 6 9 16 10 28l-9-9z"/>
            <path d="M26 33L8 37C3 39 5 48 20 48s18-8 8-12"/><path d="M20 26v15M19 3v23"/>
          </g>
          <circle cx="19" cy="3" r="2.300" fill="#e6d2ee"/><circle cx="21" cy="41" r="3.200" fill="#c80c14"/>
          <path stroke="#e8c04c" d="M1 29l4 4M5 29l-4 4M27 33l4 4M31 33l-4 4"/>
        </svg>
        <div class="readout">
          <span>1.12</span>
          <svg viewBox="0 0 20 22"><path fill="none" stroke="#dadae6" d="M8.500 2h4l-4 4h4M10.500 8v6l-6 2M10.500 14l5 3M1 13l4 5M5 13l-4 5M14 15l2 3M18 15l-3 6"/></svg>
        </div>
      </section>

      <aside class="side side-right">
        <div class="col">
          <div class="stack"><button class="tool drop" aria-label="Schizzo"><svg><use href="#sketch"/></svg></button></div>
          <div class="stack">
            <button class="tool drop" aria-label="Prisma"><svg><use href="#pad"/></svg></button>
            <button class="tool drop" aria-label="Tasca"><svg><use href="#pocket"/></svg></button>
            <button class="tool" aria-label="Albero"><svg><use href="#shaft"/></svg></button>
            <button class="tool" aria-label="Gola"><svg><use href="#groove"/></svg></button>
            <button class="tool" aria-label="Foro"><svg><use href="#hole"/></svg></button>
            <button class="tool" aria-label="Costola"><svg><use href="#rib"/></svg></button>
            <button class="tool" aria-label="Scanalatura"><svg><use href="#slot"/></svg></button>
            <button class="tool drop" aria-label="Rinforzo"><svg><use href="#stiff"/></svg></button>
            <button class="tool" aria-label="Loft"><svg><use href="#loft"/></svg></button>
            <button class="tool" aria-label="Loft rimosso"><svg><use href="#loft2"/></svg></button>
          </div>
          <div class="stack">
            <button class="tool drop" aria-label="Raccordo"><svg><use href="#fillet"/></svg></button>
            <button class="tool" aria-label="Smusso"><svg><use href="#chamfer"/></svg></button>
            <button class="tool drop" aria-label="Sformo"><svg><use href="#draft"/></svg></button>
            <button class="tool" aria-label="Svuotamento"><svg><use href="#shell"/></svg></button>
            <button class="tool" aria-label="Spessore"><svg><use href="#thick"/></svg></button>
            <button class="tool" aria-label="Filettatura"><svg><use href="#target"/></svg></button>
            <button class="tool drop" aria-label="Rimuovi faccia"><svg><use href="#replace"/></svg></button>
          </div>
          <div class="stack">
            <button class="tool" aria-label="Punto"><svg><use href="#point"/></svg></button>
            <button class="tool" aria-label="Linea"><svg><use href="#line"/></svg></button>
            <button class="tool" aria-label="Piano"><svg><use href="#plane"/></svg></button>
          </div>
          <div class="stack">
            <button class="tool" aria-label="Taglio"><svg><use href="#split"/></svg></button>
            <button class="tool" aria-label="Superficie spessa"><svg><use href="#thicksurf"/></svg></button>
            <button class="tool" aria-label="Chiudi superficie"><svg><use href="#close"/></svg></button>
            <button class="tool" aria-label="Cuci superficie"><svg><use href="#sew"/></svg></button>
          </div>
          <div class="stack">
            <button class="tool" aria-label="Vincolo"><svg><use href="#gray-corner"/></svg></button>
            <button class="tool" aria-label="Quote"><svg><use href="#frame"/></svg></button>
          </div>
        </div>
        <div class="col col-outer">
          <div class="stack"><button class="tool drop" aria-label="Seleziona"><svg><use href="#arrow-o"/></svg></button></div>
          <div class="stack">
            <button class="tool" aria-label="Corpo"><svg><use href="#catalog"/></svg></button>
            <button class="tool drop" aria-label="Gruppo geometrico"><svg><use href="#geoset"/></svg></button>
            <button class="tool" aria-label="Inserisci nel corpo"><svg><use href="#body-tree"/></svg></button>
          </div>
          <div class="stack tight"><button class="tool drop" aria-label="Traslazione"><svg><use href="#trans"/></svg></button></div>
          <div class="stack tight">
            <button class="tool" aria-label="Specchio"><svg><use href="#mirror"/></svg></button>
            <button class="tool drop" aria-label="Matrice"><svg><use href="#pattern"/></svg></button>
          </div>
          <div class="stack tight"><button class="tool drop" aria-label="Scala"><svg><use href="#scale"/></svg></button></div>
          <div class="stack">
            <button class="tool drop" aria-label="Materiale"><svg><use href="#material"/></svg></button>
            <button class="tool" aria-label="Analisi sformo"><svg><use href="#fillet-x"/></svg></button>
            <button class="tool" aria-label="Analisi curvatura"><svg><use href="#analysis"/></svg></button>
          </div>
          <div class="stack">
            <button class="tool" aria-label="Analisi filetti"><svg><use href="#tap"/></svg></button>
            <button class="tool" aria-label="Aggiorna"><svg><use href="#tap-r"/></svg></button>
            <button class="tool" aria-label="Assi"><svg><use href="#tap-b"/></svg></button>
          </div>
          <div class="stack">
            <button class="tool drop" aria-label="Testo con freccia"><svg><use href="#note"/></svg></button>
            <button class="tool drop" aria-label="Vista annotazione"><svg><use href="#note2"/></svg></button>
          </div>
          <div class="stack apart"><button class="tool drop" aria-label="Operazioni booleane"><svg><use href="#split"/></svg></button></div>
        </div>
      </aside>
    </main>

    <div class="bar bar-bottom">
      <div class="group g-tools">
        <button class="tool" aria-label="Aggiorna tutto"><svg><use href="#spiral"/></svg></button>
        <button class="tool" aria-label="Aggiornamento manuale"><svg><use href="#hand-r"/></svg></button>
        <button class="tool" aria-label="Sistema di assi"><svg><use href="#axis"/></svg></button>
        <button class="tool" aria-label="Valori medi"><svg><use href="#dims"/></svg></button>
        <button class="tool drop" aria-label="Crea riferimento"><svg><use href="#cube-teal"/></svg></button>
        <button class="tool" aria-label="Isola"><svg><use href="#pinch"/></svg></button>
        <button class="tool drop" aria-label="Struttura"><svg><use href="#stack"/></svg></button>
        <button class="tool" aria-label="Corpo corrente"><svg><use href="#erase"/></svg></button>
        <span class="combo w-xl"><select aria-label="Oggetto in lavoro"><option>solido completo</option></select></span>
      </div>
      <div class="group g-view">
        <button class="tool" aria-label="Modo volo"><svg><use href="#fly"/></svg></button>
        <button class="tool" aria-label="Adatta tutto"><svg><use href="#fit"/></svg></button>
        <button class="tool" aria-label="Trasla vista"><svg><use href="#pan"/></svg></button>
        <button class="tool" aria-label="Ruota vista"><svg><use href="#rotate"/></svg></button>
        <button class="tool" aria-label="Ingrandisci"><svg><use href="#zoom-in"/></svg></button>
        <button class="tool" aria-label="Riduci"><svg><use href="#zoom-out"/></svg></button>
        <button class="tool" aria-label="Vista normale"><svg><use href="#normal"/></svg></button>
        <button class="tool" aria-label="Viste multiple"><svg><use href="#views"/></svg></button>
        <button class="tool drop" aria-label="Vista isometrica"><svg><use href="#iso"/></svg></button>
        <button class="tool drop" aria-label="Ombreggiatura"><svg><use href="#shade"/></svg></button>
        <button class="tool" aria-label="Nascondi"><svg><use href="#hide"/></svg></button>
        <button class="tool" aria-label="Scambia spazio"><svg><use href="#swap"/></svg></button>
      </div>
      <div class="group"><button class="tool" aria-label="Stampa rapida"><svg><use href="#printer2"/></svg></button></div>
      <div class="group">
        <button class="tool" aria-label="Misura distanza"><svg><use href="#ruler"/></svg></button>
        <button class="tool" aria-label="Misura elemento"><svg><use href="#clamp"/></svg></button>
        <button class="tool" aria-label="Misura inerzia"><svg><use href="#weight"/></svg></button>
      </div>
      <div class="brand">
        <svg viewBox="0 0 22 14"><path fill="none" stroke="#d8283c" stroke-width="1.800" d="M8 1c5-1 6 1 2 4"/><path fill="none" stroke="#3a3484" stroke-width="1.800" d="M6 5l-4 8c6 0 9-7 3-7"/><path fill="none" stroke="#e8963c" stroke-width="1.800" d="M16 6c-6-1-4 3-2 4s-1 4-4 2"/></svg>
        <span>CATIA</span>
      </div>
    </div>

    <footer class="status">
      <span>Cattura</span>
      <input type="text" aria-label="Comando">
      <button aria-label="Cronologia">◱</button>
      <button aria-label="Stato">◉</button>
    </footer>

    <div class="palette">
      <div class="palette-title">
        <span>Cattura</span>
        <button class="ask" aria-label="Aiuto">?</button><button class="shut" aria-label="Chiudi">✕</button>
      </div>
      <div class="palette-body">
        <button class="tool hot" aria-label="Cattura"><svg><use href="#rec"/></svg></button>
        <button class="tool" aria-label="Seleziona"><svg><use href="#arrow"/></svg></button>
        <button class="tool" aria-label="Opzioni"><svg><use href="#props"/></svg></button>
        <button class="tool pressed" aria-label="Modo schermo"><svg><use href="#camera"/></svg></button>
        <button class="tool" aria-label="Modo pixel"><svg><use href="#pic"/></svg></button>
        <button class="tool" aria-label="Modo vettoriale"><svg><use href="#square"/></svg></button>
      </div>
    </div>
  </div>
</body>
</html>
```

FILE: styles.css
```css
* { box-sizing: border-box; }
body { margin: 0; font-family: "Open Sans", "Noto Sans", sans-serif; font-size: 7px; color: #16161e; }
button, select, input { font: inherit; color: inherit; padding: 0; margin: 0; border: 0; background: none; border-radius: 0; }
svg { display: block; }
.sprite { position: absolute; width: 0; height: 0; }

.app { position: relative; display: flex; flex-direction: column; height: 100vh; min-height: 600px; background: #d2d2e8; overflow: hidden; }
.app-icon { width: 9px; height: 9px; flex: none; }

/* title bar */
.titlebar {
  display: flex;
  align-items: center;
  gap: 3px;
  height: 12px;
  flex: none;
  background:
    radial-gradient(ellipse 16px 8px at 152px 9px, #a9c4e0, transparent),
    radial-gradient(ellipse 12px 7px at 240px 8px, #c8dcec, transparent),
    radial-gradient(ellipse 16px 7px at 290px 10px, #6ea4d4, transparent),
    radial-gradient(ellipse 13px 7px at 333px 9px, #a8c8ec, transparent),
    radial-gradient(ellipse 18px 8px at 422px 8px, #a8dcc4, transparent),
    radial-gradient(ellipse 12px 7px at 465px 10px, #b4d0f0, transparent),
    radial-gradient(ellipse 14px 8px at 515px 9px, #6cb4ac, transparent),
    radial-gradient(ellipse 16px 8px at 556px 8px, #b0dcfa, transparent),
    radial-gradient(ellipse 12px 7px at 732px 9px, #5cc4f4, transparent),
    radial-gradient(ellipse 12px 7px at 775px 9px, #8cc8ec, transparent),
    radial-gradient(ellipse 14px 7px at 958px 10px, #a89cc8, transparent),
    radial-gradient(ellipse 14px 7px at 1003px 10px, #803440, transparent),
    linear-gradient(90deg, #e8eef8 0, #dce8f4 110px, #343c4c 132px, #1c2028 300px, #16181e 700px, #0c1018 1030px, #a8c4d4 1060px, #8394a8 100%);
}
.titlebar h1 { margin: 0; font-size: 7px; font-weight: 400; line-height: 12px; }
.win-buttons { display: flex; align-self: flex-start; margin-left: auto; height: 10px; border: 1px solid #4a545e; border-top: 0; border-radius: 0 0 3px 3px; background: #8792a0; }
.win-buttons button { width: 16px; font-size: 7px; line-height: 9px; color: #fff; }
.win-buttons .win-close { width: 28px; }

/* menu */
.menubar { display: flex; align-items: center; height: 13px; flex: none; background: #d2d2e8; }
.menubar .app-icon { margin-right: 3px; }
.menubar button { padding: 0 7px 0 6px; line-height: 13px; }
.menubar .active { padding: 0 9px 0 4px; background: #fbdcae; }
.menubar .snug { padding: 0 3px 0 4px; }
.mdi-buttons { display: flex; gap: 1px; margin-left: auto; padding-right: 1px; }
.menubar .mdi-buttons button { width: 10px; height: 10px; padding: 0; border: 1px solid #fff; line-height: 8px; font-size: 6px; color: #6e88a0; background: #e6e8f2; }

/* toolbars */
.bar { display: flex; align-items: center; flex: none; height: 21px; border-top: 2px solid #fafaff; border-bottom: 1px solid #84849a; background: linear-gradient(#dcdcee, #cfcfe6 60%, #b8b8cc); }
.group { display: flex; align-items: center; height: 18px; padding-left: 3px; margin-left: 6px; border-left: 1px solid #f6f6ff; }
.group:first-child { margin-left: 4px; padding-left: 6px; }
.fields { gap: 3px; }
.fields .tool { width: 15px; }
.g-links { margin-left: 10px; }
.g-surf { margin-left: 54px; }
.g-nuts { margin-left: 10px; padding-left: 2px; }
.g-filter { margin-left: 136px; }
.close-by { margin-left: 2px; padding-left: 1px; }
.bar .g-tools { margin-left: 128px; padding-left: 3px; }
.g-view { margin-left: 61px; }
.bar-bottom { position: relative; height: 23px; }

.tool { position: relative; display: flex; align-items: center; justify-content: center; width: 17px; height: 17px; flex: none; }
.tool svg { width: 13px; height: 13px; stroke-opacity: .75; }
.drop::after { content: ""; position: absolute; right: 0; bottom: 0; border: 2px solid transparent; border-top: 3px solid #000; border-bottom: 0; }

.combo { position: relative; display: block; height: 13px; background: #fff; border: 1px solid #84849a; border-right-color: #f4f4fa; border-bottom-color: #f4f4fa; }
.combo select { appearance: none; display: block; width: 100%; height: 11px; padding: 0 9px 0 1px; line-height: 11px; font-size: 7px; }
.combo::after { content: ""; position: absolute; top: 4px; right: 3px; border: 2px solid transparent; border-top: 3px solid #000; border-bottom: 0; pointer-events: none; }
.combo:has(select:disabled) { background: #dcdcea; }
.combo select:disabled { color: #9292a0; opacity: 1; }
.combo:has(select:disabled)::after { border-top-color: #9292a0; }
.swatch select { border: 2px solid #fff; background: linear-gradient(#d6ad77, #d6ad77) no-repeat left / 20px 9px; }
.w-sm { width: 23px; }
.w-md { width: 37px; }
.w-lg { width: 44px; }
.w-xl { width: 96px; }

/* work area */
.work { display: flex; flex: 1; min-height: 0; }
.side { flex: none; background: linear-gradient(90deg, #fff 0, #e4e4f2 3px, #d4d4ea 70%, #b4b4cc); }
.side-left { width: 22px; padding-top: 3px; }
.side-right { display: flex; gap: 7px; width: 47px; padding: 3px 1px 0 1px; border-left: 3px solid #f6f6ff; background: linear-gradient(90deg, #d0d0e6, #d8d8ee 80%, #c0c0d6); }
.stack { --pitch: 17px; padding: 5px 0 6px; background: linear-gradient(#f8f8ff, #f8f8ff) no-repeat 2px 0 / 10px 1px; }
.stack .tool { height: var(--pitch); }
.side-left .tool { width: 21px; }
.side-left .drop::after { right: 1px; }
.side-left .stack-modules { --pitch: 18px; margin-top: 24px; padding-top: 3px; }
.stack-know { margin-top: 54px; --pitch: 16px; }
.stack-know .drop, .side-right .drop { height: calc(var(--pitch) + 1px); }
.fx { font-family: "Liberation Serif", serif; font-style: italic; font-weight: 700; font-size: 13px; }
.fx small { font-size: 8px; }
.tight { padding: 2px 0 4px; }
.col-outer { padding-top: 27px; }
.side-right .col { width: 17px; }
.apart { margin-top: 10px; }

.viewport { position: relative; flex: 1; min-width: 0; overflow: hidden; border-top: 1px solid #5c5c74; background: linear-gradient(#383467 0, #3c3869 25%, #444076 50%, #4b4879 68%, #66659a 78%, #8886aa 88%, #acacbf 100%); }
.scene { position: absolute; inset: 0; width: 100%; height: 100%; }

/* specification tree */
.tree { position: relative; list-style: none; margin: 0; padding: 54px 0 0 6px; width: 200px; color: #dadaea; font-family: "Noto Sans", sans-serif; font-size: 10px; }
.tree li { display: flex; align-items: center; height: 22px; }
.tree li:nth-child(even) { height: 21px; }
.tree svg { position: relative; width: 18px; height: 18px; flex: none; }
.tree span { margin: 4px 0 0 1px; padding: 0 1px; line-height: 14px; background: rgba(48, 46, 94, .55); white-space: nowrap; }
.tree b { font-weight: 500; color: #fff; }
.tree .root-icon { margin-left: -6px; margin-right: 1px; }
.trunk, .branch { position: relative; align-self: stretch; flex: none; width: 16px; }
.branch { width: 10px; }
.trunk::before, .branch::before { content: ""; position: absolute; top: -3px; bottom: 0; left: 0; width: 1px; background: #dcdce8; }
.branch.last::before { bottom: 50%; }
.trunk.blank::before { display: none; }
.branch::after { content: ""; position: absolute; top: 50%; left: 0; width: 10px; height: 1px; background: #dcdce8; }
.knob { position: absolute; z-index: 1; top: calc(50% - 5px); left: -5px; width: 10px; height: 10px; border-radius: 5px; background: linear-gradient(#000, #000) no-repeat center / 8px 2px, linear-gradient(#000, #000) no-repeat center / 2px 8px, #85858f; }
.knob.minus { background: linear-gradient(#000, #000) no-repeat center / 8px 2px, #85858f; }
.tree .current { text-decoration: underline; }

.compass { position: absolute; top: 8px; right: 27px; width: 40px; height: 52px; }
.readout { position: absolute; right: 4px; bottom: 6px; display: flex; align-items: center; gap: 10px; color: #e4e4ee; font-size: 8px; }
.readout svg { width: 20px; height: 22px; }

.brand { position: absolute; right: 4px; bottom: 1px; display: flex; flex-direction: column; align-items: center; color: #322f78; font: italic 700 7px/8px "Liberation Sans", sans-serif; }
.brand svg { width: 20px; height: 13px; }

/* status bar */
.status { display: flex; align-items: center; gap: 2px; flex: none; height: 14px; padding: 0 1px 0 2px; border-bottom: 1px solid #5c6480; background: #d2d2e8; }
.status span { flex: 1; }
.status input { width: 177px; height: 11px; background: #fff; border: 1px solid #84849a; }
.status button { width: 18px; height: 11px; border: 1px solid #f6f6ff; border-right-color: #9292a8; border-bottom-color: #9292a8; line-height: 9px; color: #a8a8bc; background: #c9c9dc; }

/* floating capture palette */
.palette { position: absolute; top: -1px; left: 593px; width: 121px; padding: 0 4px 4px; border: 1px solid #4c5460; border-radius: 0 0 4px 4px; background: linear-gradient(#cdd5de, #aab4c2 40%, #d6dce6); box-shadow: 0 1px 3px rgba(0, 0, 0, .6); }
.palette-title { display: flex; height: 15px; line-height: 15px; }
.palette-title span { flex: 1; }
.palette-title button { height: 10px; border: 1px solid #5a6470; border-top: 0; line-height: 9px; font-weight: 700; color: #fff; background: #8f9aa8; }
.palette-title .ask { width: 17px; border-radius: 0 0 0 3px; }
.palette-title .shut { width: 28px; border-radius: 0 0 3px 0; background: linear-gradient(#dd8a7c, #bc3420); }
.palette-body { display: flex; align-items: center; height: 27px; padding-left: 3px; border: 1px solid #6c6458; background: radial-gradient(ellipse 18px 12px at 8px 24px, #48708c, transparent), linear-gradient(#fbe6c4, #f7dfc0); }
.palette-body .tool { border: 1px solid #fff6e4; border-right-color: #a89878; border-bottom-color: #a89878; }
.palette-body .hot { background: #f6bc94; }
.palette-body .pressed { margin-left: 3px; border-color: #8c7c60 #fff #fff #8c7c60; background: #e4d2b0; }
```
